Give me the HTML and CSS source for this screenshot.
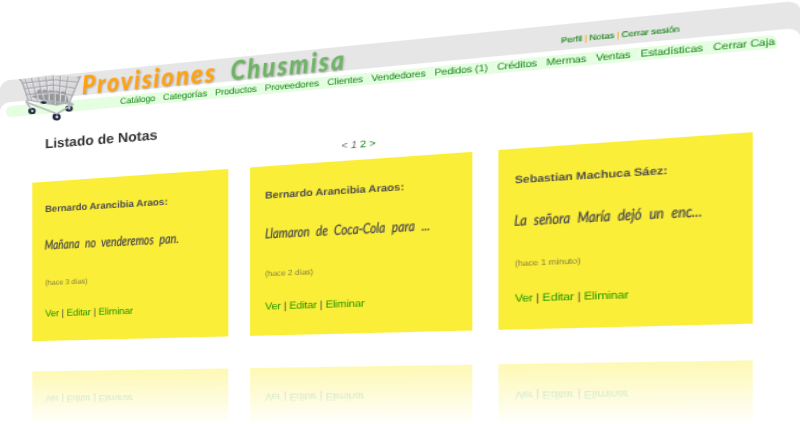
FILE: index.html
```html
<!DOCTYPE html>
<html lang="es">
<head>
<meta charset="utf-8">
<title>Provisiones Chusmisa</title>
<link rel="stylesheet" href="styles.css">
</head>
<body>
<div class="page">
  <header class="header">
    <svg class="cart" viewBox="60 69 180 150" aria-hidden="true">
      <path d="M58 88 L155 75 L235 81 L204 156 L166 164 L84 150 Z" fill="#d3d3d5" opacity=".75"/>
      <path d="M92 139 L116 118 L196 125 L202 155 L166 164 Z" fill="#96979b"/>
      <g fill="none" stroke="#ececee" stroke-width="3">
        <path d="M66 103 L158 92 L227 100 M72 120 L157 108 L220 118 M78 137 L160 127 L212 139"/>
        <path d="M78 87 L98 149 M97 84 L115 153 M117 82 L132 158 M139 80 L147 160 M160 77 L163 163 M181 78 L177 162 M204 79 L191 158"/>
      </g>
      <g fill="none" stroke="#a3a4a8" stroke-width="3">
        <path d="M65 100 L157 89 L228 97 M71 117 L157 105 L222 115 M77 134 L160 124 L214 136"/>
        <path d="M75 87 L95 149 M94 84 L112 153 M114 82 L129 157 M136 80 L144 160 M157 77 L160 163 M178 78 L174 162 M201 79 L188 158"/>
      </g>
      <path d="M58 88 L66 95 L84 150 L166 164 L204 156 L235 81 L226 84" fill="none" stroke="#a9aaae" stroke-width="4"/>
      <g fill="#24283a">
        <ellipse cx="129" cy="157" rx="9" ry="4"/>
        <ellipse cx="95" cy="182" rx="11" ry="9.500"/>
        <ellipse cx="167" cy="199" rx="12" ry="10.500"/>
        <ellipse cx="203" cy="174" rx="11" ry="9"/>
      </g>
      <path d="M84 146 L78 155 L92 176 M78 156 L168 190 L214 162 L203 155 M128 150 L215 162" fill="none" stroke="#b4b5ba" stroke-width="5"/>
      <g fill="#b9c4e4">
        <ellipse cx="96" cy="182" rx="4" ry="4"/>
        <ellipse cx="168" cy="199" rx="4.500" ry="4.500"/>
        <ellipse cx="204" cy="173" rx="4" ry="4"/>
      </g>
    </svg>
    <h1 class="brand"><span class="brand-first">Provisiones</span><span class="brand-second">Chusmisa</span></h1>
    <div class="user"><a>Perfil</a> <i>|</i> <a>Notas</a> <i>|</i> <a>Cerrar sesión</a></div>
  </header>
  <main class="panel">
    <nav class="nav">
      <a>Catálogo</a><a>Categorías</a><a>Productos</a><a>Proveedores</a><a>Clientes</a><a>Vendedores</a><a>Pedidos (1)</a><a>Créditos</a><a>Mermas</a><a>Ventas</a><a>Estadísticas</a><a>Cerrar Caja</a>
    </nav>
    <h2 class="title">Listado de Notas</h2>
    <div class="pager">&lt; <em>1</em> <a>2</a> <a>&gt;</a></div>
    <section class="notes">
      <article class="note">
        <h3 class="author">Bernardo Arancibia Araos:</h3>
        <p class="message">Mañana no venderemos pan.</p>
        <p class="time">(hace 3 días)</p>
        <p class="actions"><a>Ver</a> | <a>Editar</a> | <a>Eliminar</a></p>
      </article>
      <article class="note">
        <h3 class="author">Bernardo Arancibia Araos:</h3>
        <p class="message">Llamaron de Coca-Cola para ...</p>
        <p class="time">(hace 2 días)</p>
        <p class="actions"><a>Ver</a> | <a>Editar</a> | <a>Eliminar</a></p>
      </article>
      <article class="note">
        <h3 class="author">Sebastian Machuca Sáez:</h3>
        <p class="message">La señora María dejó un enc...</p>
        <p class="time">(hace 1 minuto)</p>
        <p class="actions"><a>Ver</a> | <a>Editar</a> | <a>Eliminar</a></p>
      </article>
    </section>
  </main>
</div>
</body>
</html>
```
FILE: styles.css
```css
* { box-sizing: border-box; }

body {
  margin: 0;
  height: 424px;
  overflow: hidden;
  background: #fff;
  color: #4d4d4d;
  font-family: "Liberation Sans", Arial, sans-serif;
  text-rendering: geometricPrecision;
}

h1, h2, h3, p { margin: 0; }
a { color: #128412; }

/* The whole page leans away to the left. */
.page {
  width: 648.5px;
  height: 424px;
  padding-top: 81px;
  transform-origin: 0 0;
  transform: matrix3d(1, -0.12427, 0, -0.0002924, 0, 1, 0, 0, 0, 0, 1, 0, 0, 0, 0, 1);
}

.header {
  position: relative;
  display: flex;
  height: 32px;
  padding-left: 80px;
  border-radius: 9px 9px 0 0;
  background: #e6e6e6;
}

.cart {
  position: absolute;
  z-index: 2;
  left: 20px;
  top: -6px;
  width: 60px;
  height: 50px;
  overflow: visible;
  transform-origin: 0 0;
  transform: skewY(5.7deg);
}

.brand {
  position: relative;
  z-index: 2;
  display: flex;
  width: 402px;
  height: 30px;
  margin-top: -3px;
  font: italic 900 25px/30px Lato, "Liberation Sans", sans-serif;
  letter-spacing: 2px;
  text-shadow: 1px 1px 2px rgba(0, 0, 0, .25);
  white-space: nowrap;
}
.brand span { transform-origin: 0 50%; }
.brand-first { width: 136px; color: #ffa111; transform: scaleX(.87); }
.brand-second { width: 96px; color: #6db465; transform: scaleX(.83); }

.user {
  padding-top: 11px;
  font-size: 7px;
  line-height: 8px;
  letter-spacing: -.1px;
  white-space: nowrap;
  -webkit-text-stroke: .08px #128412;
}
.user i { color: #ffa111; font-style: normal; -webkit-text-stroke-color: #ffa111; }

.panel {
  position: relative;
  height: 320px;
  margin-top: -10px;
  padding-top: 3.5px;
  border-radius: 9px 9px 0 0;
  background: #fff;
}

.nav {
  display: flex;
  justify-content: space-between;
  width: 627px;
  height: 11.5px;
  margin-left: 6px;
  padding: 0 1px 0 110px;
  border-radius: 5px 5px 0 5px;
  background: #e5fee1;
  font-size: 8.4px;
  line-height: 11.5px;
  letter-spacing: -.13px;
  white-space: nowrap;
}
.nav a + a { box-shadow: -4px 0 0 -3px #f3fff1; }

.title {
  margin: 22px 0 0 44.4px;
  color: #333;
  font-size: 13.2px;
  line-height: 15px;
}

.pager {
  margin: 10.5px 0 0 310.5px;
  color: #666;
  font-size: 9px;
  line-height: 11px;
}

.notes {
  display: flex;
  gap: 19.3px;
  margin: 8.5px 0 0 31.7px;
}

.note {
  flex: 0 0 182.2px;
  width: 182.2px;
  min-width: 0;
  height: 156.6px;
  padding: 22px 12.8px 0;
  background: #fbee39;
  white-space: nowrap;
  -webkit-box-reflect: below 30px linear-gradient(transparent 66%, rgba(0, 0, 0, .38));
}
.author { font-size: 9.2px; line-height: 10px; letter-spacing: -.03px; }
.message {
  margin-top: 22px;
  font: italic 500 13px/16px Lato, "Liberation Sans", sans-serif;
  word-spacing: 4px;
  transform: scaleX(.75);
  transform-origin: 0 50%;
  -webkit-text-stroke: .2px #4d4d4d;
}
.time {
  margin-top: 25.5px;
  color: #85813f;
  font-size: 7.2px;
  line-height: 8px;
  letter-spacing: -.08px;
}
.actions {
  margin-top: 21.5px;
  font-size: 9.3px;
  line-height: 10px;
  letter-spacing: -.15px;
}
.actions a { color: #249800; }
```
